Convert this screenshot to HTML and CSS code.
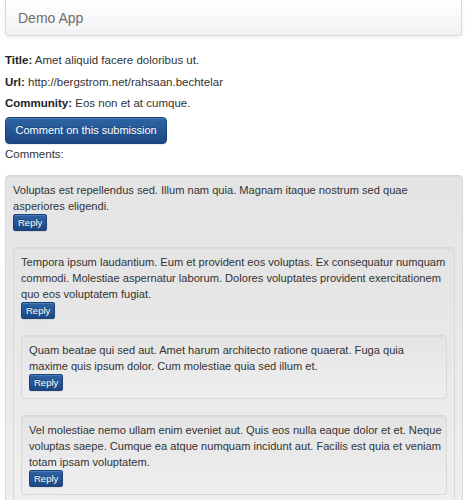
FILE: index.html
```html
<!DOCTYPE html>
<html lang="en">
<head>
<meta charset="utf-8">
<title>Demo App</title>
<link rel="stylesheet" href="styles.css">
</head>
<body>
<header class="navbar"><span class="brand">Demo App</span></header>
<main class="page">
  <p class="field"><b>Title:</b> Amet aliquid facere doloribus ut.</p>
  <p class="field"><b>Url:</b> http://bergstrom.net/rahsaan.bechtelar</p>
  <p class="field"><b>Community:</b> Eos non et at cumque.</p>
  <button class="btn btn-primary">Comment on this submission</button>
  <div class="comments-label">Comments:</div>
  <div class="well">
    <p class="comment-text">Voluptas est repellendus sed. Illum nam quia. Magnam itaque nostrum sed quae<br>asperiores eligendi.</p>
    <button class="btn btn-reply">Reply</button>
    <div class="well">
      <p class="comment-text">Tempora ipsum laudantium. Eum et provident eos voluptas. Ex consequatur numquam<br>commodi. Molestiae aspernatur laborum. Dolores voluptates provident exercitationem<br>quo eos voluptatem fugiat.</p>
      <button class="btn btn-reply">Reply</button>
      <div class="well">
        <p class="comment-text">Quam beatae qui sed aut. Amet harum architecto ratione quaerat. Fuga quia<br>maxime quis ipsum dolor. Cum molestiae quia sed illum et.</p>
        <button class="btn btn-reply">Reply</button>
      </div>
      <div class="well">
        <p class="comment-text">Vel molestiae nemo ullam enim eveniet aut. Quis eos nulla eaque dolor et et. Neque<br>voluptas saepe. Cumque ea atque numquam incidunt aut. Facilis est quia et veniam<br>totam ipsam voluptatem.</p>
        <button class="btn btn-reply">Reply</button>
      </div>
    </div>
  </div>
</main>
</body>
</html>
```
FILE: styles.css
```css
html, body {
  margin: 0;
  padding: 0;
  background: #ffffff;
}
body {
  padding: 0 10px 0 5px;
  font-family: "Liberation Sans", Arial, Helvetica, sans-serif;
  font-size: 11.5px;
  line-height: 16px;
  color: #333333;
}
.navbar {
  height: 36px;
  box-sizing: border-box;
  padding: 8px 12px 7px;
  background: linear-gradient(#ffffff, #f2f2f2);
  border: 1px solid #d9d9d9;
  border-top: none;
  border-radius: 0 0 4px 4px;
  box-shadow: 0 1px 4px rgba(0, 0, 0, 0.07);
  margin-right: 1px;
}
.brand {
  font-size: 14px;
  line-height: 20px;
  color: #6f6f6f;
}
.page {
  padding-top: 16px;
}
.field {
  margin: 0 0 5.5px;
}
.field b {
  font-weight: bold;
  color: #222;
}
.btn {
  font-family: "Liberation Sans", Arial, Helvetica, sans-serif;
  color: #ffffff;
  border: 1px solid #1c4379;
  text-shadow: 0 -1px 0 rgba(0, 0, 0, 0.25);
  background: linear-gradient(#2d64a6, #1c4884);
  box-shadow: inset 0 1px 0 rgba(255, 255, 255, 0.15), 0 1px 1px rgba(0, 0, 0, 0.08);
  cursor: pointer;
  display: block;
}
.btn-primary {
  font-size: 11px;
  line-height: 15px;
  padding: 5px 9.5px;
  border-radius: 4px;
}
.comments-label {
  margin-top: 2px;
  margin-bottom: 13.5px;
}
.well {
  background: linear-gradient(#e4e4e4, #efefef);
  border: 1px solid #d8d8d8;
  border-radius: 4px;
  box-shadow: inset 0 1px 1px rgba(0, 0, 0, 0.05);
  padding: 6px 7px 7px;
}
.well .well {
  margin-top: 16px;
}
.comment-text {
  margin: 0;
  font-size: 11.1px;
  white-space: nowrap;
}
.btn-reply {
  font-size: 9.5px;
  line-height: 13px;
  padding: 1px 4px;
  border-radius: 2px;
}
```
